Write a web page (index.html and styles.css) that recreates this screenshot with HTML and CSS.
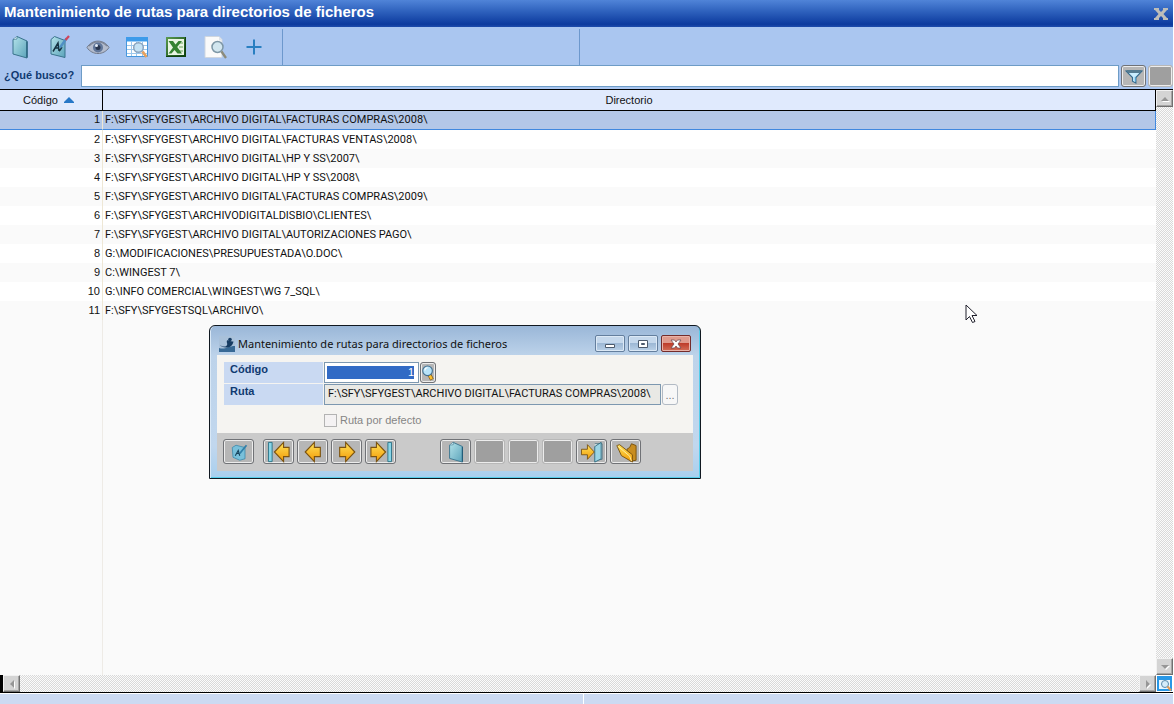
FILE: index.html
```html
<!DOCTYPE html>
<html lang="es">
<head>
<meta charset="utf-8">
<title>Mantenimiento de rutas para directorios de ficheros</title>
<link rel="stylesheet" href="styles.css">
</head>
<body>
<svg class="defs" aria-hidden="true">
  <defs>
    <linearGradient id="g-page" x1="0" y1="0" x2="1" y2="1"><stop offset="0" stop-color="#b4e3ea"/><stop offset="1" stop-color="#5ba3ba"/></linearGradient>
    <linearGradient id="g-gold" x1="0" y1="0" x2="0" y2="1"><stop offset="0" stop-color="#ffe25a"/><stop offset="1" stop-color="#f29a05"/></linearGradient>
    <linearGradient id="g-green" x1="0" y1="0" x2="1" y2="1"><stop offset="0" stop-color="#5c9b50"/><stop offset="1" stop-color="#0c4510"/></linearGradient>
    <symbol id="i-page" viewBox="0 0 24 24"><path d="M5 4.500 9 1.500 19 6V23L5 19z" fill="url(#g-page)" stroke="#39738c" stroke-linejoin="round"/><path d="M9 1.500v2.500L5 4.500" fill="#e6faff" stroke="#39738c" stroke-width=".7"/><path d="M19 6.500v16" stroke="#225d79" stroke-width="1.300"/></symbol>
    <symbol id="i-edit" viewBox="0 0 24 24"><path d="M4 4.500 7.500 1.500 18 5.500V22.500L4 19z" fill="url(#g-page)" stroke="#39738c" stroke-linejoin="round"/><path d="M6 16.500 11 8l1 8M8 13h4M12 16c2-1 2-3 3-4" fill="none" stroke="#153241" stroke-width="1.500"/><path d="m13 12.500 6.500-9" stroke="#4f8fc4" stroke-width="2.400"/><path d="m18.500 5 3.500-4" stroke="#d0455b" stroke-width="2.200"/></symbol>
    <symbol id="i-editblue" viewBox="0 0 24 24"><path d="M3 6 8 3l12 3v15L13 23 4 19z" fill="#79c0da" stroke="#3786a8" stroke-linejoin="round"/><path d="M7 17 11 10l2 7M9 14h4" fill="none" stroke="#17435c" stroke-width="1.500"/><path d="m13 14 9-11" stroke="#317fa8" stroke-width="2.400"/></symbol>
    <symbol id="i-eye" viewBox="0 0 24 24"><path d="M1 12.500C6 4 18 4 23 12.500 18 20.500 6 20.500 1 12.500z" fill="#b3bccd" stroke="#71798a"/><path d="M3 11C8 5.500 16 5.500 21 11" fill="none" stroke="#7d8697" stroke-width="1.300"/><circle cx="12" cy="12.500" r="5" fill="#61779a"/><circle cx="12" cy="12.500" r="2.500" fill="#29364e"/><circle cx="10.500" cy="10.500" r="1.500" fill="#e4edf8"/></symbol>
    <symbol id="i-grid" viewBox="0 0 24 24"><path d="M1.500 2.500h21v19h-21z" fill="#fff" stroke="#4697dd"/><path d="M1 2h22v4.500H1z" fill="#3d9bea"/><path d="M2 10.500h20M2 14.500h20M2 18.500h20M6.500 7v14M11.500 7v14M17.500 7v14" stroke="#9cc7ec"/><circle cx="13.500" cy="12.500" r="4.800" fill="#c3e1f4" stroke="#8aa3bd" stroke-width="1.500"/><path d="m17.500 16.500 4 5.500" stroke="#e7a15e" stroke-width="2.800"/></symbol>
    <symbol id="i-excel" viewBox="0 0 24 24"><path d="M2 2h20v20H2z" fill="#10430f"/><path d="M2 2h19v19H2z" fill="url(#g-green)"/><path d="M4 4h16v16H4z" fill="#e9f5e3"/><path d="M15 7h4v2h-4zM15 11h4v2h-4zM15 15h4v2h-4z" fill="#a9cd9f"/><path d="M4.500 6h4.500l2.500 3.500L14.500 6h3.500l-4.800 6 4.800 6.500h-4.500L10.500 15l-3 3.500H4.500l4.500-6z" fill="#368331"/></symbol>
    <symbol id="i-find" viewBox="0 0 24 24"><path d="M2 1.500h14l3 3v18H2z" fill="#fafafa" stroke="#cfd6df"/><path d="M16 1.500v4h3" fill="#dfe3e9"/><circle cx="14.500" cy="12" r="5.500" fill="#d2e6ef" stroke="#7e97a6" stroke-width="1.500"/><path d="m18.500 16.500 4.500 6.500" stroke="#8b8b7c" stroke-width="2.300"/></symbol>
    <symbol id="i-plus" viewBox="0 0 24 24"><path d="M12 4.500v15M4.500 12h15" stroke="#297fc1" stroke-width="2"/></symbol>
    <symbol id="i-funnel" viewBox="0 0 24 24"><path d="M1.500 5.500h21L14.500 14v7.500L10 19V14z" fill="#c9edff" stroke="#356a8d" stroke-width="1.500"/><path d="M1.500 4h21l-2.500 4h-16z" fill="#557b91"/><path d="M14 13h-1v6h1.500z" fill="#49a9dd"/></symbol>
    <symbol id="i-lens" viewBox="0 0 16 20"><path d="m9.500 11.500 3 6" stroke="#7d5819" stroke-width="4.500"/><path d="m9.500 12 2.700 5" stroke="#fcbf2d" stroke-width="3"/><circle cx="7.500" cy="7.500" r="5.500" fill="#b7e3f9" stroke="#426f8f" stroke-width="1.300"/><path d="M4.500 7q0-3 3-3" fill="none" stroke="#fff" stroke-width="1.300"/></symbol>
    <symbol id="i-arrow" viewBox="0 0 24 24"><path d="M3.500 12 13.500 1.500V7H20v10h-6.500v5.500z" fill="url(#g-gold)" stroke="#7c5310" stroke-width="1.200"/></symbol>
    <symbol id="i-first" viewBox="0 0 24 24"><path d="M.5 1.500h4v21h-4z" fill="#89d5e7" stroke="#287184"/><path d="M7 12 17 1.500V7h6v10h-6v5.500z" fill="url(#g-gold)" stroke="#7c5310" stroke-width="1.200"/></symbol>
    <symbol id="i-door" viewBox="0 0 24 24"><path d="M15 3h8v17h-7" fill="#f0f8fa" stroke="#4b7180"/><path d="M15 6 22 1.500V19.500L15 23z" fill="#9bd4e4" stroke="#2e697e"/><path d="M.5 9H7V4l7.500 8L7 20v-5H.5z" fill="url(#g-gold)" stroke="#7c5310"/></symbol>
    <symbol id="i-folder" viewBox="0 0 24 24"><path d="M13 9 16 7l2-4 5 2v16l-6 1z" fill="#c88d20" stroke="#76500d"/><path d="M2 5 5 4l14 11v8L7 16z" fill="url(#g-gold)" stroke="#76500d"/><path d="m3 5.500 13 11 2 5.500" fill="none" stroke="#fff1a5"/></symbol>
  </defs>
</svg>
<div class="app">
  <header class="titlebar"><h1>Mantenimiento de rutas para directorios de ficheros</h1>
    <button class="close" aria-label="Cerrar"><svg viewBox="0 0 14 14"><path d="M0 1h5v2l2 2 2-2V1h5v2h-1L9.500 7l3.500 4h1v2H9v-2L7 9l-2 2v2H0v-2h1l3.500-4L1 3H0z" fill="#bdbdb9"/></svg></button></header>
  <nav class="toolbar">
    <div class="tools">
      <button aria-label="Nuevo"><svg><use href="#i-page"/></svg></button>
      <button aria-label="Editar"><svg><use href="#i-edit"/></svg></button>
      <button aria-label="Ver"><svg><use href="#i-eye"/></svg></button>
      <button aria-label="Consultar"><svg><use href="#i-grid"/></svg></button>
      <button aria-label="Exportar a Excel"><svg><use href="#i-excel"/></svg></button>
      <button aria-label="Vista previa"><svg><use href="#i-find"/></svg></button>
      <button aria-label="Añadir"><svg><use href="#i-plus"/></svg></button>
    </div>
    <div class="tools spare"></div>
  </nav>
  <form class="search">
    <label for="q">¿Qué busco?</label>
    <input id="q" type="text">
    <button type="button" class="btn filter" aria-label="Filtrar"><svg><use href="#i-funnel"/></svg></button>
    <button type="button" class="btn blank" aria-label="Sin función" disabled></button>
  </form>
  <main class="grid">
    <div class="rows">
      <table>
        <thead><tr><th class="code">Código<svg class="sort" viewBox="0 0 10 6"><path d="M5 0 10 5v1H0V5z" fill="#2778c7"/></svg></th><th>Directorio</th></tr></thead>
        <tbody>
          <tr class="selected"><td>1</td><td>F:\SFY\SFYGEST\ARCHIVO DIGITAL\FACTURAS COMPRAS\2008\</td></tr>
          <tr><td>2</td><td>F:\SFY\SFYGEST\ARCHIVO DIGITAL\FACTURAS VENTAS\2008\</td></tr>
          <tr><td>3</td><td>F:\SFY\SFYGEST\ARCHIVO DIGITAL\HP Y SS\2007\</td></tr>
          <tr><td>4</td><td>F:\SFY\SFYGEST\ARCHIVO DIGITAL\HP Y SS\2008\</td></tr>
          <tr><td>5</td><td>F:\SFY\SFYGEST\ARCHIVO DIGITAL\FACTURAS COMPRAS\2009\</td></tr>
          <tr><td>6</td><td>F:\SFY\SFYGEST\ARCHIVODIGITALDISBIO\CLIENTES\</td></tr>
          <tr><td>7</td><td>F:\SFY\SFYGEST\ARCHIVO DIGITAL\AUTORIZACIONES PAGO\</td></tr>
          <tr><td>8</td><td>G:\MODIFICACIONES\PRESUPUESTADA\O.DOC\</td></tr>
          <tr><td>9</td><td>C:\WINGEST 7\</td></tr>
          <tr><td>10</td><td>G:\INFO COMERCIAL\WINGEST\WG 7_SQL\</td></tr>
          <tr><td>11</td><td>F:\SFY\SFYGESTSQL\ARCHIVO\</td></tr>
        </tbody>
      </table>
    </div>
    <div class="bar vertical">
      <button class="step" aria-label="Subir"><svg viewBox="0 0 8 8"><path d="M0 6 4 2l4 4z"/></svg></button>
      <button class="step" aria-label="Bajar"><svg viewBox="0 0 8 8"><path d="M0 2h8L4 6z"/></svg></button>
    </div>
    <div class="bar horizontal">
      <button class="step" aria-label="Izquierda"><svg viewBox="0 0 8 8"><path d="M6 0v8L2 4z"/></svg></button>
      <button class="step" aria-label="Derecha"><svg viewBox="0 0 8 8"><path d="M2 0v8l4-4z"/></svg></button>
    </div>
    <button class="corner" aria-label="Buscar en la lista"><svg viewBox="0 0 15 15"><path d="M1 1h13v13H1z" fill="#e9f5fd" stroke="#2897e6" stroke-width="2"/><path d="M1 1h13v3H1z" fill="#2897e6"/><circle cx="8" cy="8" r="3.500" fill="#d5ecfa" stroke="#5b89aa"/><path d="m10.500 10.500 3.500 4" stroke="#e09a58" stroke-width="2"/></svg></button>
  </main>
  <footer class="status"><div></div><div></div></footer>
</div>

<section class="dialog" role="dialog" aria-labelledby="dlg-title">
  <header class="caption">
    <svg class="logo" viewBox="0 0 16 16"><path d="M0 0h16v16H0z" fill="#a9c1da"/><path d="M0 12c6 2 9-2 16-2v6H0z" fill="#376995"/><path d="M1 9c3 2 6 2 7 0 1-1-1-3 0-4.500 2-1 3 1.500 6.500 1-1 4-3 6-7.500 6-3 0-5-1-6-2.500z" fill="#163b62"/><circle cx="11" cy="3.500" r="1.800" fill="#163b62"/></svg>
    <h2 id="dlg-title">Mantenimiento de rutas para directorios de ficheros</h2>
    <button class="win" aria-label="Minimizar"><svg viewBox="0 0 12 10"><path d="M1.500 5.500h9v3h-9z" fill="#fff" stroke="#4c5a6c"/></svg></button>
    <button class="win" aria-label="Maximizar"><svg viewBox="0 0 12 10"><path d="M1.500 1.500h9v7h-9z" fill="#fff" stroke="#4c5a6c"/><path d="M4.500 4.500h3v1h-3z" fill="#8cabca" stroke="#4c5a6c"/></svg></button>
    <button class="win red" aria-label="Cerrar ventana"><svg viewBox="0 0 12 10"><path d="M1 1h3.500L6 3l1.500-2H11L8 5l3 4H7.500L6 7 4.500 9H1l3-4z" fill="#fff" stroke="#63424a" stroke-width=".7"/></svg></button>
  </header>
  <form class="fields">
    <div class="field">
      <label for="codigo">Código</label>
      <div class="box"><input id="codigo" type="text" value="1"></div>
      <button type="button" class="btn lens" aria-label="Buscar código"><svg><use href="#i-lens"/></svg></button>
    </div>
    <div class="field">
      <label for="ruta">Ruta</label>
      <input id="ruta" type="text" readonly value="F:\SFY\SFYGEST\ARCHIVO DIGITAL\FACTURAS COMPRAS\2008\">
      <button type="button" class="browse" aria-label="Examinar">...</button>
    </div>
    <div class="default"><input id="defecto" type="checkbox" disabled><label for="defecto">Ruta por defecto</label></div>
  </form>
  <div class="actions">
    <div class="group"><button class="btn" aria-label="Modificar"><svg class="small"><use href="#i-editblue"/></svg></button></div>
    <div class="group nav">
      <button class="btn" aria-label="Primero"><svg><use href="#i-first"/></svg></button>
      <button class="btn" aria-label="Anterior"><svg><use href="#i-arrow"/></svg></button>
      <button class="btn" aria-label="Siguiente"><svg class="flip"><use href="#i-arrow"/></svg></button>
      <button class="btn" aria-label="Último"><svg class="flip"><use href="#i-first"/></svg></button>
    </div>
    <div class="group">
      <button class="btn" aria-label="Nuevo registro"><svg><use href="#i-page"/></svg></button>
      <button class="btn blank" aria-label="Vacío 1" disabled></button>
      <button class="btn blank" aria-label="Vacío 2" disabled></button>
      <button class="btn blank" aria-label="Vacío 3" disabled></button>
      <button class="btn" aria-label="Salir"><svg><use href="#i-door"/></svg></button>
      <button class="btn" aria-label="Abrir carpeta"><svg><use href="#i-folder"/></svg></button>
    </div>
  </div>
</section>
<svg class="pointer" viewBox="0 0 13 20" aria-hidden="true"><path d="M1 1v15l3.500-3.500 3 6 2.500-1-3-6h5z" fill="#fff" stroke="#20202c" stroke-linejoin="round"/></svg>
</body>
</html>
```
FILE: styles.css
```css
* { box-sizing: border-box; }
body {
  margin: 0;
  overflow: hidden;
  background: #fff;
  color: #111;
  font: 11px/14px "Liberation Sans", Arial, sans-serif;
}
button, input { margin: 0; padding: 0; font: inherit; color: inherit; }
button { display: flex; align-items: center; justify-content: center; border: 0; background: none; flex: none; }
h1, h2 { margin: 0; flex: 1; }
svg { display: block; }
.defs { position: absolute; width: 0; height: 0; }
.flip { transform: scaleX(-1); }

.app { display: flex; flex-direction: column; height: 100vh; padding-right: 1px; }

.titlebar {
  display: flex;
  align-items: center;
  height: 27px;
  padding: 0 5px 4px 4px;
  background: linear-gradient(#5084d8, #2c5fbb 45%, #0d3a9e 90%, #1e4cac);
}
.titlebar h1 { color: #fff; font-size: 15px; line-height: 20px; }
.close { align-self: flex-end; height: 18px; }
.close svg { width: 14px; height: 14px; }

.toolbar { display: flex; height: 38px; padding-top: 2px; background: #aac6f0; }
.tools { display: flex; align-items: center; width: 283px; border-right: 1px solid #6d98cd; }
.tools.spare { width: 297px; }
.tools button { width: 39px; }
.tools svg { width: 24px; height: 24px; }

.search {
  display: flex;
  align-items: stretch;
  height: 24px;
  padding: 0 0 2px 4px;
  gap: 2px;
  background: #aac6f0;
}
.search label { width: 75px; color: #103a70; font-weight: bold; line-height: 20px; white-space: nowrap; }
.search input { flex: 1; min-width: 0; border: 1px solid #6e9cc6; background: #fff; outline: 0; }

.btn {
  width: 31px;
  height: 25px;
  border: 1px solid #707276;
  border-radius: 3px;
  background: #b6b6b6;
  box-shadow: inset 0 0 0 1px #ececec;
}
.btn svg { width: 22px; height: 22px; }
.btn svg.small { width: 18px; height: 18px; }
.btn.blank { background: #9f9f9f; border-color: #b8b8b8; }
.search .btn { width: 25px; height: 22px; }
.search .btn svg { width: 18px; height: 18px; }

.grid {
  flex: 1;
  min-height: 0;
  display: grid;
  grid-template: minmax(0, 1fr) 17px / minmax(0, 1fr) 17px;
  border-top: 1px solid #000;
  border-bottom: 1px solid #000;
}
.rows { background: linear-gradient(90deg, #fafafa 102px, #eeebe6 102px, #eeebe6 103px, #fafafa 103px); }
table { width: 100%; table-layout: fixed; border-collapse: separate; border-spacing: 0; }
th, td { padding: 0; white-space: nowrap; }
th {
  height: 21px;
  border-right: 1px solid #000;
  border-bottom: 1px solid #000;
  background: #e0eafd;
  font-weight: normal;
}
.code { width: 103px; padding-right: 5px; }
.sort { display: inline-block; width: 10px; height: 6px; margin: 0 0 1px 6px; }
td { height: 19px; padding: 0 0 1px 2px; background: #fafafa; line-height: 15px; font-family: Roboto, "Liberation Sans", sans-serif; }
td:first-child { padding-right: 2px; text-align: right; border-right: 1px solid #eee7d5; font-family: inherit; }
tr:nth-child(even) td { background: #fff; }
tr.selected td { background: #b3c7e8; border-bottom: 1px solid #4088df; }
tr.selected td:last-child { border-right: 1px solid #4088df; }

.bar {
  display: flex;
  justify-content: space-between;
  background: repeating-conic-gradient(#d9d9d9 0 25%, #fbfbfb 0 50%) 0 0 / 2px 2px;
}
.vertical { flex-direction: column; }
.horizontal { border-left: 3px solid #000; }
.step {
  width: 17px;
  height: 17px;
  background: #d4d4d4;
  border: 1px solid;
  border-color: #f1f1f1 #707070 #707070 #f1f1f1;
  box-shadow: inset -1px -1px #a4a4a4;
}
.step svg { width: 8px; height: 8px; fill: #969696; filter: drop-shadow(1px 1px #fff); }
.corner svg { width: 15px; height: 15px; }

.status { display: flex; height: 11px; padding-top: 1px; gap: 1px; background: #fff; }
.status div { flex: 100; background: #ccdaf2; }
.status div:first-child { flex: 99; }

.dialog {
  position: absolute;
  left: 209px;
  top: 325px;
  width: 492px;
  padding: 0 7px 7px;
  border: 1px solid #101820;
  border-radius: 6px 6px 0 0;
  background: linear-gradient(#9ab7d8, #bdd3ea 30px, #c1d7ee 120px, #a8cfee);
  box-shadow: inset 1px 0 #d9e8f6, inset -1px -1px #55cdea;
}
.caption { display: flex; align-items: center; height: 29px; gap: 3px; padding: 6px 2px 0; }
.logo { width: 16px; height: 16px; }
.caption h2 { font: 11px/20px "Noto Sans", "Open Sans", sans-serif; white-space: nowrap; }
.win {
  width: 30px;
  height: 17px;
  border: 1px solid #647f9e;
  border-radius: 2px;
  background: linear-gradient(#c5d8ec 45%, #9db8d5 50%, #bad1e8);
  box-shadow: inset 0 0 0 1px #dce9f6;
}
.win svg { width: 12px; height: 10px; }
.red { border-color: #742c2b; background: linear-gradient(#df9a8d 45%, #be3d2b 50%, #d46f59); box-shadow: inset 0 0 0 1px #e9b3a9; }

.fields { display: flex; flex-direction: column; gap: 1px; padding: 7px 7px 6px; background: #f5f4f1; }
.field { display: flex; height: 21px; gap: 1px; }
.field label { width: 99px; padding-left: 6px; background: #c9d9f2; color: #103a70; font-weight: bold; }
.box { width: 95px; padding: 2px; border: 1px solid #7d98b0; background: #fff; }
.box input { width: 87px; height: 13px; border: 0; background: #316ac5; color: #fff; text-align: right; outline: 0; }
.lens { width: 16px; height: 21px; }
.lens svg { width: 14px; height: 18px; }
#ruta { width: 337px; padding: 0 3px 1px; border: 1px solid #7d98b0; background: #e9e9e5; outline: 0; font-family: Roboto, "Liberation Sans", sans-serif; }
.browse { width: 16px; border: 1px solid #b2bac4; border-radius: 3px; background: #f7f7f7; color: #777; }
.default { display: flex; align-items: center; gap: 3px; padding: 7px 0 0 100px; color: #858585; }
.default input { appearance: none; width: 13px; height: 13px; border: 1px solid #b3b3b3; background: #f4f2f3; }

.actions { display: flex; height: 38px; padding: 6px; background: #cacaca; }
.group { display: flex; gap: 3px; }
.group.nav { margin: 0 44px 0 9px; }

.pointer { position: absolute; left: 965px; top: 304px; width: 13px; height: 20px; }
```
